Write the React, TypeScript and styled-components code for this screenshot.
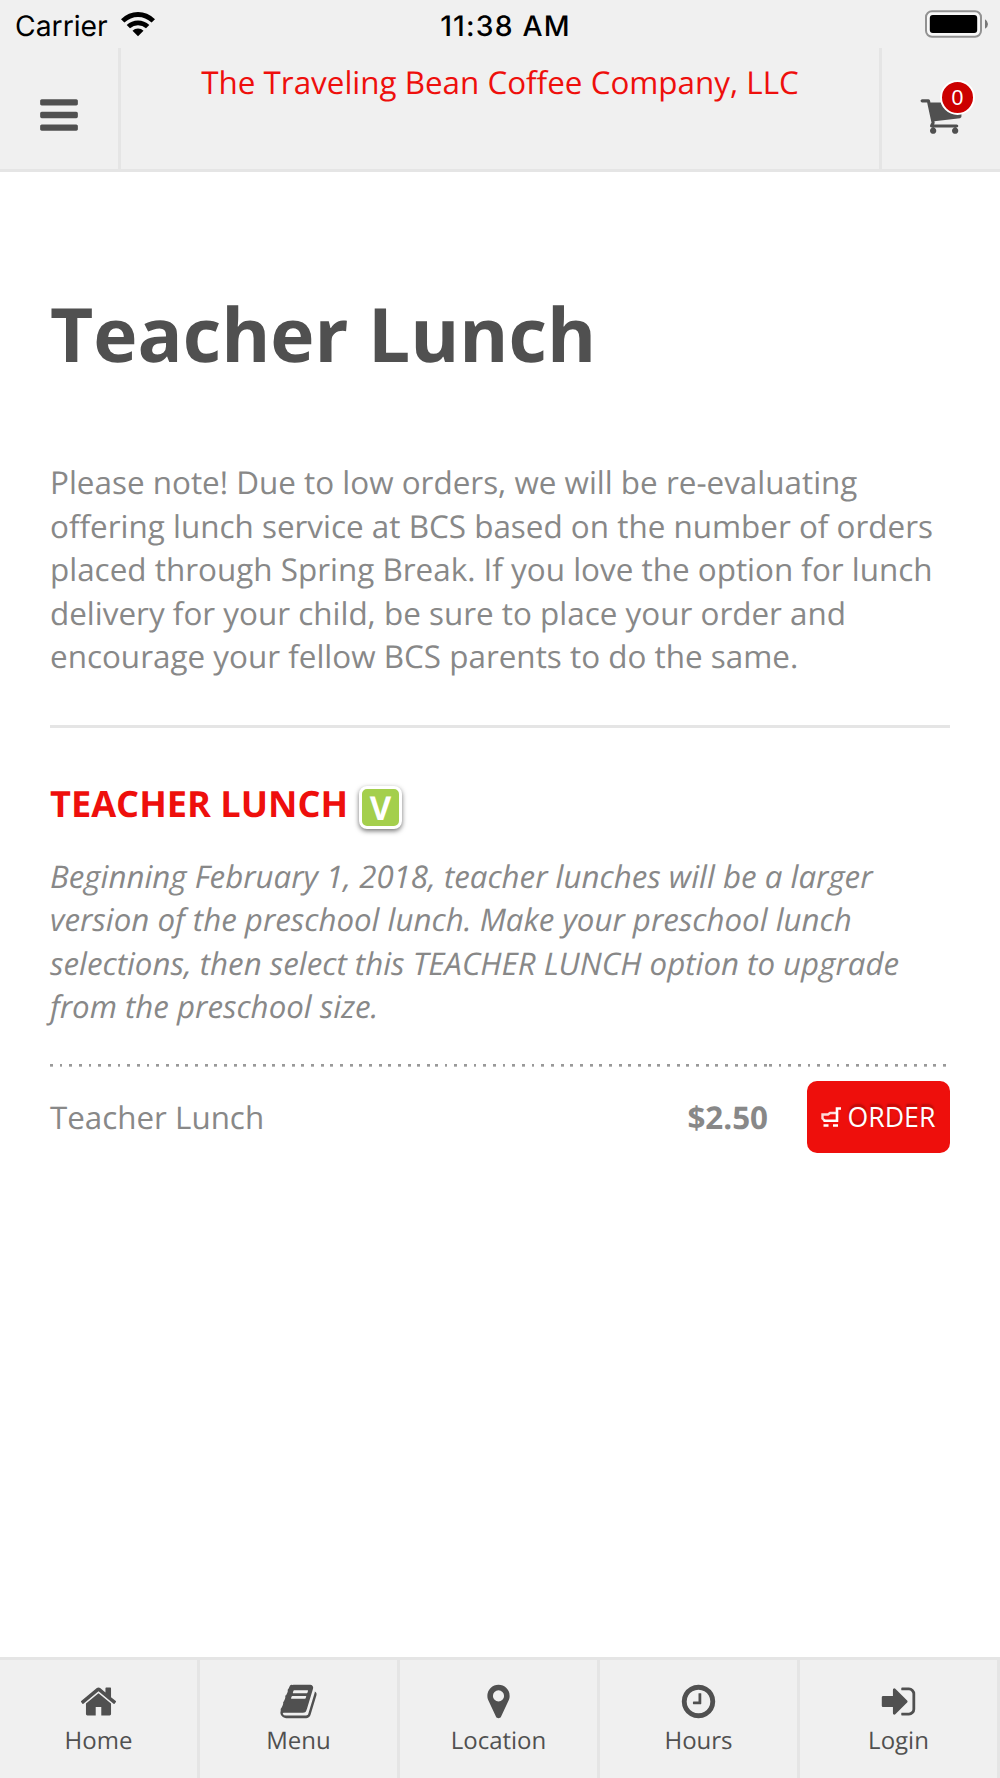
import React from "react";
import styled, { createGlobalStyle } from "styled-components";

const Global = createGlobalStyle`
  * { box-sizing: border-box; }
  body { margin: 0; background: #fff; font-family: "Open Sans", "Noto Sans", sans-serif; color: #888; text-rendering: geometricPrecision; }
`;

const Screen = styled.div`
  width: 1000px;
  height: 1778px;
  display: flex;
  flex-direction: column;
  overflow: hidden;
`;

const StatusBar = styled.div`
  height: 48px;
  flex: none;
  background: #f0f0f0;
  display: grid;
  grid-template-columns: 1fr auto 1fr;
  align-items: center;
  padding: 3px 12px 0 15px;
  font-family: Inter, Roboto, sans-serif;
  font-size: 28.3px;
  line-height: 36px;
  color: #000;
`;

const Carrier = styled.div`
  display: flex;
  align-items: center;
  gap: 13px;
`;

const WifiSvg = styled.svg`
  display: block;
  margin-top: -2px;
`;

const Clock = styled.span`
  font-weight: 500;
  letter-spacing: 1.2px;
  transform: translateX(4px);
`;

const BatterySvg = styled.svg`
  justify-self: end;
  display: block;
  margin-top: -3px;
`;

const Header = styled.header`
  height: 124px;
  flex: none;
  display: flex;
  background: #f0f0f0;
  border-bottom: 3px solid #e5e5e5;
`;

const HeaderButton = styled.button<{ $side: "left" | "right" }>`
  width: 121px;
  padding: 13px 0 0;
  border: 0 solid #e5e5e5;
  border-${(p) => (p.$side === "left" ? "right" : "left")}-width: 3px;
  background: none;
  color: #505050;
  display: flex;
  align-items: center;
  justify-content: center;
`;

const Title = styled.div`
  flex: 1;
  padding-top: 13px;
  text-align: center;
  font-size: 31.4px;
  line-height: 44px;
  color: #ee0f0c;
`;

const CartHolder = styled.span`
  position: relative;
  display: flex;
`;

const Count = styled.span`
  position: absolute;
  left: 21px;
  top: -13px;
  width: 35px;
  height: 35px;
  border: 2px solid #fff;
  border-radius: 50%;
  background: #c00;
  color: #fff;
  font-size: 21.3px;
  line-height: 33px;
  text-align: center;
`;

const Glyph = styled.svg<{ $size: number }>`
  width: ${(p) => p.$size}px;
  height: ${(p) => p.$size}px;
  fill: currentColor;
  display: block;
  flex: none;
`;

const Content = styled.main`
  flex: 1;
  padding: 110px 50px 0;
`;

const PageTitle = styled.h1`
  margin: 0;
  font-size: 74.8px;
  line-height: 102px;
  font-weight: 700;
  color: #505050;
`;

const Note = styled.p`
  margin: 77px 0 0;
  font-size: 31.43px;
  line-height: 43.5px;
  white-space: nowrap;
`;

const Rule = styled.hr`
  margin: 46px 0 0;
  border: 0;
  height: 3px;
  background: #e5e5e5;
`;

const ItemHeading = styled.h2`
  margin: 47px 0 0;
  height: 56px;
  display: flex;
  align-items: center;
  font-size: 36.15px;
  line-height: 50px;
  font-weight: 700;
  color: #ee0f0c;
`;

const VegTag = styled.span`
  margin: 10px 0 0 11px;
  width: 43px;
  height: 43px;
  border: 3px solid #fff;
  border-radius: 8px;
  background: #a4cf4c;
  box-shadow: 0 2px 5px rgba(0, 0, 0, 0.55);
  color: #fff;
  font-size: 33px;
  line-height: 37px;
  text-align: center;
`;

const Description = styled(Note)`
  margin-top: 25px;
  font-size: 31.25px;
  font-style: italic;
`;

const PriceRow = styled.div`
  margin-top: 34px;
  display: flex;
`;

const Cell = styled.div<{ $width: number; $align?: string }>`
  width: ${(p) => p.$width}px;
  display: flex;
  align-items: center;
  justify-content: ${(p) => p.$align || "flex-start"};
  height: 92px;
  padding-top: 17px;
  font-size: 31.35px;
  line-height: 46px;
  background: repeating-linear-gradient(90deg, #999 0 2.8px, transparent 2.8px 9.67px) 0 0 / 100% 2.67px no-repeat;
`;

const Price = styled.strong`
  padding-right: 1px;
`;

const OrderButton = styled.button`
  width: 143px;
  height: 72px;
  margin: 0 0 2px;
  border: 0;
  border-radius: 10px;
  padding: 0 1px 1px 0;
  background: #ee0f0c;
  color: #fff;
  display: flex;
  align-items: center;
  justify-content: center;
  gap: 7px;
  font: 26.67px "Open Sans", sans-serif;
  text-shadow: 0 -3px 2px rgba(0, 0, 0, 0.25);
`;

const TabBar = styled.nav`
  height: 121px;
  flex: none;
  display: grid;
  grid-template-columns: repeat(5, 1fr);
  background: #f0f0f0;
  border-top: 3px solid #e5e5e5;
`;

const Tab = styled.a`
  display: flex;
  flex-direction: column;
  align-items: center;
  padding-top: 22px;
  gap: 3px;
  border-right: 3px solid #e5e5e5;
  color: #505050;
  font-size: 24px;
  line-height: 33px;
`;

const paths = {
  bars: "M1664 1344v128q0 26-19 45t-45 19h-1408q-26 0-45-19t-19-45v-128q0-26 19-45t45-19h1408q26 0 45 19t19 45zm0-512v128q0 26-19 45t-45 19h-1408q-26 0-45-19t-19-45v-128q0-26 19-45t45-19h1408q26 0 45 19t19 45zm0-512v128q0 26-19 45t-45 19h-1408q-26 0-45-19t-19-45v-128q0-26 19-45t45-19h1408q26 0 45 19t19 45z",
  cart: "M704 1536q0 52-38 90t-90 38-90-38-38-90 38-90 90-38 90 38 38 90zm896 0q0 52-38 90t-90 38-90-38-38-90 38-90 90-38 90 38 38 90zm128-1088v512q0 24-16.5 42.5t-40.5 21.5l-1044 122q13 60 13 70 0 16-24 64h920q26 0 45 19t19 45-19 45-45 19h-1024q-26 0-45-19t-19-45q0-11 8-31.5t16-36 21.5-40 15.5-29.5l-177-823h-204q-26 0-45-19t-19-45 19-45 45-19h256q16 0 28.5 6.5t19.5 15.5 13 24.5 8 26 5.5 29.5 4.5 26h1201q26 0 45 19t19 45z",
  home: "M1472 992v480q0 26-19 45t-45 19h-384v-384h-256v384h-384q-26 0-45-19t-19-45v-480q0-1 .5-3t.5-3l575-474 575 474q1 2 1 6zm223-69l-62 74q-8 9-21 11h-3q-13 0-21-7l-692-577-692 577q-12 8-24 7-13-2-21-11l-62-74q-8-10-7-23.5t11-21.5l719-599q32-26 76-26t76 26l244 204v-195q0-14 9-23t23-9h192q14 0 23 9t9 23v408l219 182q10 8 11 21.5t-7 23.5z",
  book: "M1703 478q40 57 18 129l-275 906q-19 64-76.5 107.5t-122.5 43.5h-923q-77 0-148.5-53.5t-99.5-131.5q-24-67-2-127 0-4 3-27t4-37q1-8-3-21.5t-3-19.5q2-11 8-21t16.5-23.5 16.5-23.5q23-38 45-91.5t30-91.5q3-10 .5-30t-.5-28q3-11 17-28t17-23q21-36 42-92t25-90q1-9-2.5-32t.5-28q4-13 22-30.5t22-22.5q19-26 42.5-84.5t27.5-96.5q1-8-3-25.5t-2-26.5q2-8 9-18t18-23 17-21q8-12 16.5-30.5t15-35 16-36 19.5-32 26.5-23.5 36-11.5 47.5 5.5l-1 3q38-9 51-9h761q74 0 114 56t18 130l-274 906q-36 119-71.5 153.5t-128.5 34.5h-869q-27 0-38 15-11 16-1 43 24 70 144 70h923q29 0 56-15.5t35-41.5l300-987q7-22 5-57 38 15 59 43zm-1064 2q-4 13 2 22.5t20 9.5h608q13 0 25.5-9.5t16.5-22.5l21-64q4-13-2-22.5t-20-9.5h-608q-13 0-25.5 9.5t-16.5 22.5zm-83 256q-4 13 2 22.5t20 9.5h608q13 0 25.5-9.5t16.5-22.5l21-64q4-13-2-22.5t-20-9.5h-608q-13 0-25.5 9.5t-16.5 22.5z",
  marker: "M1152 640q0-106-75-181t-181-75-181 75-75 181 75 181 181 75 181-75 75-181zm256 0q0 109-33 179l-364 774q-16 33-47.5 52t-67.5 19-67.5-19-46.5-52l-365-774q-33-70-33-179 0-212 150-362t362-150 362 150 150 362z",
  clock: "M1024 544v448q0 14-9 23t-23 9h-320q-14 0-23-9t-9-23v-64q0-14 9-23t23-9h224v-352q0-14 9-23t23-9h64q14 0 23 9t9 23zm416 352q0-148-73-273t-198-198-273-73-273 73-198 198-73 273 73 273 198 198 273 73 273-73 198-198 73-273zm224 0q0 209-103 385.5t-279.5 279.5-385.5 103-385.5-103-279.5-279.5-103-385.5 103-385.5 279.5-279.5 385.5-103 385.5 103 279.5 279.5 103 385.5z",
  signIn: "M1312 896q0 26-19 45l-544 544q-19 19-45 19t-45-19-19-45v-288h-448q-26 0-45-19t-19-45v-384q0-26 19-45t45-19h448v-288q0-26 19-45t45-19 45 19l544 544q19 19 19 45zm352-352v704q0 119-84.5 203.5t-203.5 84.5h-320q-13 0-22.5-9.5t-9.5-22.5q0-4-1-20t-.5-26.5 3-23.5 10-19.5 20.5-6.5h320q66 0 113-47t47-113v-704q0-66-47-113t-113-47h-312l-11.5-1-11.5-3-8-5.5-7-9-2-13.5q0-4-1-20t-.5-26.5 3-23.5 10-19.5 20.5-6.5h320q119 0 203.5 84.5t84.5 203.5z",
};

type IconName = keyof typeof paths;

const Icon = ({ name, size }: { name: IconName; size: number }) => (
  <Glyph $size={size} viewBox="0 0 1792 1792">
    <path d={paths[name]} />
  </Glyph>
);

const Wifi = () => (
  <WifiSvg width="34" height="25" viewBox="0 0 34 25">
    <path d="M0 7.2Q7.5 0 17 0T34 7.2L30.6 10.6Q24.6 5 17 5T3.4 10.6Z" />
    <path d="M5.7 13Q10.5 8.4 17 8.4T28.3 13L25 16.3Q21.5 13.2 17 13.2T9 16.3Z" />
    <path d="M11.5 18.7Q13.8 16.6 17 16.6T22.5 18.7L17 24.3Z" />
  </WifiSvg>
);

const Battery = () => (
  <BatterySvg width="63" height="28" viewBox="0 0 63 28">
    <rect x="1" y="1.2" width="55" height="25.6" rx="6" fill="#f8f8f8" stroke="#929292" strokeWidth="2" />
    <rect x="4.8" y="5" width="47.4" height="18" rx="3" />
    <path d="M60 9.2Q63 11 63 14T60 18.8Z" fill="#777" />
  </BatterySvg>
);

const OrderCart = () => (
  <svg width="20" height="20" viewBox="0 0 20 20" fill="none" stroke="#fff">
    <path d="M20 1.5h-4v12.2H2.5" strokeWidth="2.6" />
    <path d="M15 6H9L7 7.5H1.5v4l2 2" strokeWidth="2.4" opacity=".85" />
    <path d="M2.5 18.5h5M12 18.5h5" strokeWidth="2.6" />
  </svg>
);

const tabs: { label: string; icon: IconName }[] = [
  { label: "Home", icon: "home" },
  { label: "Menu", icon: "book" },
  { label: "Location", icon: "marker" },
  { label: "Hours", icon: "clock" },
  { label: "Login", icon: "signIn" },
];

export default function App() {
  return (
    <Screen>
      <Global />
      <StatusBar>
        <Carrier>
          <span>Carrier</span>
          <Wifi />
        </Carrier>
        <Clock>11:38 AM</Clock>
        <Battery />
      </StatusBar>
      <Header>
        <HeaderButton $side="left">
          <Icon name="bars" size={44} />
        </HeaderButton>
        <Title>The Traveling Bean Coffee Company, LLC</Title>
        <HeaderButton $side="right">
          <CartHolder>
            <Icon name="cart" size={44} />
            <Count>0</Count>
          </CartHolder>
        </HeaderButton>
      </Header>
      <Content>
        <PageTitle>Teacher Lunch</PageTitle>
        <Note>
          Please note! Due to low orders, we will be re-evaluating
          <br />
          offering lunch service at BCS based on the number of orders
          <br />
          placed through Spring Break. If you love the option for lunch
          <br />
          delivery for your child, be sure to place your order and
          <br />
          encourage your fellow BCS parents to do the same.
        </Note>
        <Rule />
        <ItemHeading>
          TEACHER LUNCH <VegTag>V</VegTag>
        </ItemHeading>
        <Description>
          Beginning February 1, 2018, teacher lunches will be a larger
          <br />
          version of the preschool lunch. Make your preschool lunch
          <br />
          selections, then select this TEACHER LUNCH option to upgrade
          <br />
          from the preschool size.
        </Description>
        <PriceRow>
          <Cell $width={385}>Teacher Lunch</Cell>
          <Cell $width={334} $align="flex-end">
            <Price>$2.50</Price>
          </Cell>
          <Cell $width={181} $align="flex-end">
            <OrderButton>
              <OrderCart />
              ORDER
            </OrderButton>
          </Cell>
        </PriceRow>
      </Content>
      <TabBar>
        {tabs.map((t) => (
          <Tab key={t.label}>
            <Icon name={t.icon} size={39} />
            {t.label}
          </Tab>
        ))}
      </TabBar>
    </Screen>
  );
}
